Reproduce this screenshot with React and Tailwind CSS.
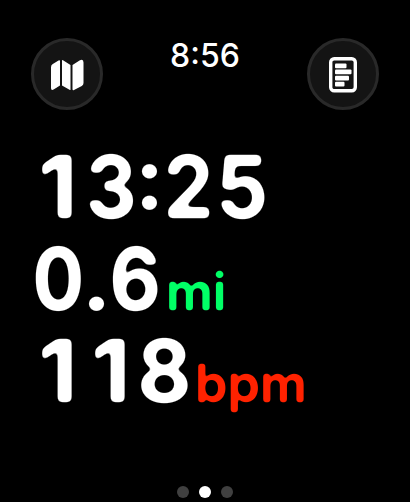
// Softens the alpha edge and then sharpens it again, which rounds every corner of the lettering.
function RoundingFilter({ id, blur, slope, intercept }) {
  return (
    <filter id={id} x="-10%" y="-10%" width="120%" height="120%" colorInterpolationFilters="sRGB">
      <feGaussianBlur stdDeviation={blur} />
      <feComponentTransfer>
        <feFuncA type="linear" slope={slope} intercept={intercept} />
      </feComponentTransfer>
    </filter>
  );
}

const cellClass = { ":": "w-[24px]", ".": "w-[24px]" };

const glyphClass = {
  "0": "scale-x-[0.88]",
  "1": "scale-x-[1.04] -translate-x-[1px]",
  "2": "scale-x-[0.91]",
  "3": "scale-x-[0.91]",
  "5": "scale-x-[0.94]",
  "6": "scale-x-[0.91]",
  "8": "scale-x-[0.95]",
  ":": "scale-x-[1.05] -translate-y-[9px]",
  ".": "scale-x-[1.05]",
};

function Digits({ text }) {
  return (
    <span className="flex text-[87px] leading-[92px] font-bold text-white [filter:url(#round-lg)]">
      {text.split("").map((c, i) => (
        <span key={i} className={"flex justify-center " + (cellClass[c] || "w-[53px]")}>
          <span className={"inline-block " + glyphClass[c]}>{c}</span>
        </span>
      ))}
    </span>
  );
}

function Unit({ text, className }) {
  return (
    <span className={"text-[52px] leading-[92px] font-semibold [filter:url(#round-sm)] " + className}>
      {text}
    </span>
  );
}

function RoundButton({ label, children }) {
  return (
    <button aria-label={label} className="flex size-[72px] items-center justify-center rounded-full border-[3px] border-[#292929] bg-[#141414] pt-[2px]">
      {children}
    </button>
  );
}

export default function App() {
  return (
    <main className="relative flex h-[502px] w-[410px] flex-col overflow-hidden bg-black font-['Inter',sans-serif]">
      <svg width="0" height="0" className="absolute" aria-hidden="true">
        <RoundingFilter id="round-lg" blur="2.9" slope="6" intercept="-2.3" />
        <RoundingFilter id="round-sm" blur="1.6" slope="4" intercept="-1.2" />
      </svg>
      <header className="flex h-[110px] items-start justify-between pt-[38px] pr-[31px] pl-[31px]">
        <RoundButton label="Map">
          <svg width="34" height="32" viewBox="0 0 34 32" fill="#fff">
            <path d="M1 8.2Q1 6 2.8 5L8.5 1.5Q10 .7 10 2V26.5L4 30.3Q1 32 1 29Z" />
            <path d="M12 1.5Q12 .6 13 1.2L20.5 6V30.5Q20.5 31.4 19.5 30.8L12 26.5Z" />
            <path d="M22.5 6L29.5 1.5Q33.500-.5 33.500 3.500V24Q33.500 26 31.800 27L24 31Q22.500 31.800 22.500 30Z" />
          </svg>
        </RoundButton>
        <time className="mt-[2px] text-[32px] leading-[32px] font-medium text-white">
          8<span className="inline-block -translate-y-[3px]">:</span>56
        </time>
        <RoundButton label="Notes">
          <svg width="28" height="36" viewBox="0 0 28 36" fill="none">
            <rect x="1.700" y="1.700" width="24.600" height="32" rx="3.500" stroke="#fff" strokeWidth="3.400" />
            <g fill="#fff">
              <rect x="6" y="6.500" width="11.500" height="4.700" rx="1" />
              <rect x="6" y="12.600" width="16.500" height="4.700" rx="1" />
              <rect x="6" y="18.700" width="14" height="4.700" rx="1" />
              <rect x="6" y="24.800" width="9.500" height="4.700" rx="1" />
            </g>
          </svg>
        </RoundButton>
      </header>
      <section className="mt-[31px] flex flex-col pl-[32px]">
        <div className="flex h-[92px] items-baseline"><Digits text="13:25" /></div>
        <div className="flex h-[92px] items-baseline"><Digits text="0.6" /><Unit text="mi" className="ml-[4px] text-[#00ff66]" /></div>
        <div className="flex h-[92px] items-baseline"><Digits text="118" /><Unit text="bpm" className="ml-[4px] text-[#ff2200]" /></div>
      </section>
      <footer className="mt-auto flex h-[16px] items-start justify-center gap-[10px]">
        <i className="size-[12px] rounded-full bg-[#404040]" />
        <i className="size-[12px] rounded-full bg-white" />
        <i className="size-[12px] rounded-full bg-[#404040]" />
      </footer>
    </main>
  );
}
